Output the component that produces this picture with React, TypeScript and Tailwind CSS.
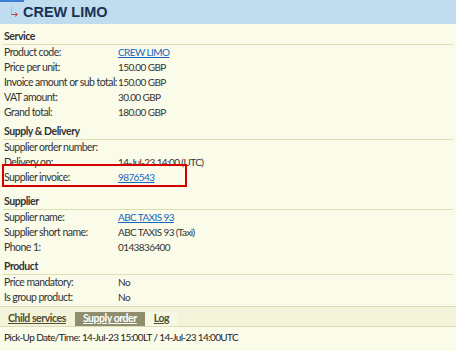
const FONT = { fontFamily: 'Lato, "Liberation Sans", Arial, sans-serif' };

type Row = { label: string; value?: string; link?: boolean };

const sections: { title: string; rows: Row[]; gap: string }[] = [
  {
    title: "Service",
    gap: "mt-0",
    rows: [
      { label: "Product code:", value: "CREW LIMO", link: true },
      { label: "Price per unit:", value: "150.00 GBP" },
      { label: "Invoice amount or sub total:", value: "150.00 GBP" },
      { label: "VAT amount:", value: "30.00 GBP" },
      { label: "Grand total:", value: "180.00 GBP" },
    ],
  },
  {
    title: "Supply & Delivery",
    gap: "mt-[3px]",
    rows: [
      { label: "Supplier order number:" },
      { label: "Delivery on:", value: "14-Jul-23 14:00 (UTC)" },
      { label: "Supplier invoice:", value: "9876543", link: true },
    ],
  },
  {
    title: "Supplier",
    gap: "mt-[8px]",
    rows: [
      { label: "Supplier name:", value: "ABC TAXIS 93", link: true },
      { label: "Supplier short name:", value: "ABC TAXIS 93 (Taxi)" },
      { label: "Phone 1:", value: "0143836400" },
    ],
  },
  {
    title: "Product",
    gap: "mt-[3px]",
    rows: [
      { label: "Price mandatory:", value: "No" },
      { label: "Is group product:", value: "No" },
    ],
  },
];

function SubIcon() {
  return (
    <svg width="9" height="11" viewBox="0 0 9 11" className="shrink-0">
      <path d="M1.5 0.5 V7.5" stroke="#9a8fa0" strokeWidth="1" strokeDasharray="1 1" />
      <path d="M1.5 7.5 H7" stroke="#c0404a" strokeWidth="1" />
      <path d="M5 5.5 L7.5 7.5 L5 9.5" stroke="#c0404a" strokeWidth="1" fill="none" />
    </svg>
  );
}

export default function App() {
  return (
    <div
      className="relative h-[351px] w-[456px] overflow-hidden bg-[#fafbe9] text-[10.5px] tracking-[-0.55px] text-[#333]"
      style={FONT}
    >
      <div className="flex h-[24px] flex-col bg-[#c0ddf0]">
        <div className="h-[2px] w-[24px] bg-[#3b7fd4]" />
        <div className="flex items-center gap-[4px] pl-[10px] pt-[1px]">
          <SubIcon />
          <span
            className="text-[14.5px] font-bold leading-[18px] tracking-normal text-[#1b3154]"
            style={{ fontFamily: '"Liberation Sans", Arial, sans-serif' }}
          >
            CREW LIMO
          </span>
        </div>
      </div>

      <div className="px-[3px] pt-[4px]">
        {sections.map((s) => (
          <div key={s.title} className={s.gap}>
            <div className="border-b border-[#dde0ae] pl-[1px] font-bold leading-[16px] tracking-[-0.45px] text-[#333]">
              {s.title}
            </div>
            {s.rows.map((r) => (
              <div key={r.label} className="flex whitespace-nowrap leading-[15px]">
                <div className="w-[115px] shrink-0 pl-[1px]">{r.label}</div>
                {r.value &&
                  (r.link ? (
                    <span className="text-[10px] tracking-[-0.6px] text-[#1565c0] underline">{r.value}</span>
                  ) : (
                    <span className="text-[10px] tracking-[-0.6px]">{r.value}</span>
                  ))}
              </div>
            ))}
          </div>
        ))}
      </div>

      <div className="mt-[1px] flex h-[21px] items-end gap-[5px] border-y border-[#dcdcb4] bg-[#f3f3d9] pl-[4px] tracking-[-0.45px]">
        <span className="px-[4px] pb-[1px] font-bold leading-[13px] text-[#4d4d33] underline">Child services</span>
        <div className="flex">
          <span className="bg-[#8e8e6e] px-[8px] pb-[1px] font-bold leading-[13px] text-white underline">Supply order</span>
          <span className="bg-[#f7f7e6] px-[9px] pb-[1px] font-bold leading-[13px] text-[#4d4d33] underline">Log</span>
        </div>
      </div>

      <div className="whitespace-nowrap pl-[4px] pt-[3px] text-[10px] leading-[14px] tracking-[-0.62px] text-[#222]">
        Pick-Up Date/Time: 14-Jul-23 15:00LT / 14-Jul-23 14:00UTC
      </div>

      <div className="absolute left-[2px] top-[164px] h-[23px] w-[185px] border-2 border-[#d40000]" />
    </div>
  );
}
